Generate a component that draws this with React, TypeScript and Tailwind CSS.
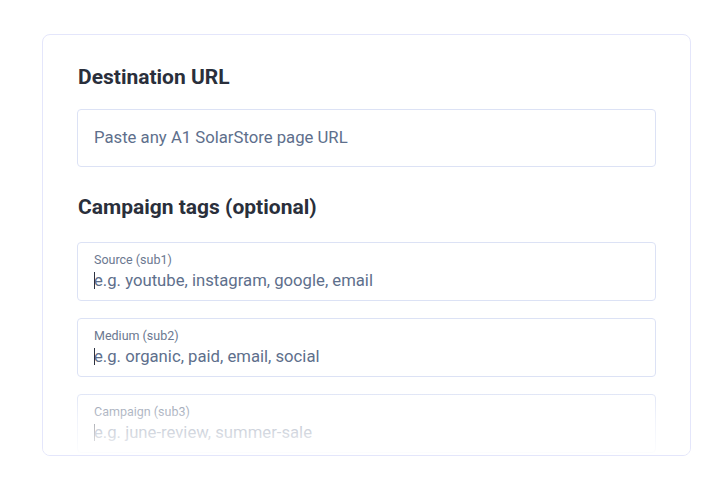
import React from 'react';

const fields = [
  { label: 'Source (sub1)', placeholder: 'e.g. youtube, instagram, google, email' },
  { label: 'Medium (sub2)', placeholder: 'e.g. organic, paid, email, social' },
  { label: 'Campaign (sub3)', placeholder: 'e.g. june-review, summer-sale' },
];

const Caret: React.FC = () => (
  <span className="absolute left-0 top-[3px] h-[17px] w-px bg-[#2b3140]" />
);

const TagField: React.FC<{ label: string; placeholder: string }> = ({ label, placeholder }) => (
  <div className="h-[59px] shrink-0 rounded-[4px] border border-[#dce2f5] bg-white px-4 pt-[9px]">
    <div className="text-[12.5px] leading-[16px] text-[#6b7890]">{label}</div>
    <div className="relative mt-[1px] text-[16.7px] leading-[24px] text-[#5e6f8c]">
      <Caret />
      {placeholder}
    </div>
  </div>
);

export default function App() {
  return (
    <div className="min-h-[487px] w-full bg-white pl-[42px] pr-[28px] pt-[34px] font-['Roboto',sans-serif]">
      <div className="relative h-[422px] w-[649px] overflow-hidden rounded-[8px] border border-[#e4e6fb] bg-white px-[34px] pt-[28px]">
        <h2 className="pl-px text-[21px] font-bold leading-[28px] text-[#2a2f3b]">Destination URL</h2>
        <div className="mt-[18px] flex h-[58px] items-center rounded-[4px] border border-[#dce2f5] px-4 text-[16.7px] text-[#5e6f8c]">
          Paste any A1 SolarStore page URL
        </div>
        <h2 className="mt-[26px] pl-px text-[21px] font-bold leading-[28px] text-[#2a2f3b]">Campaign tags (optional)</h2>
        <div className="mt-[21px] flex flex-col gap-[17px]">
          {fields.map((f) => (
            <TagField key={f.label} label={f.label} placeholder={f.placeholder} />
          ))}
        </div>
        <div className="pointer-events-none absolute inset-x-0 bottom-0 h-[70px] bg-gradient-to-b from-white/0 via-white/60 to-white/95" />
      </div>
    </div>
  );
}
